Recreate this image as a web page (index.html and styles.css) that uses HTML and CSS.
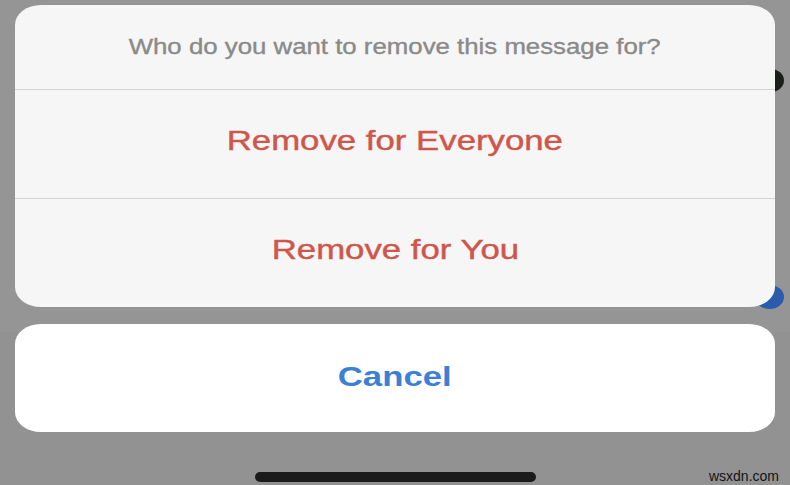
FILE: index.html
```html
<!DOCTYPE html>
<html lang="en">
<head>
<meta charset="utf-8">
<title>Remove message</title>
<link rel="stylesheet" href="styles.css">
</head>
<body>
<div class="screen">
  <span class="peek peek-dark"></span>
  <span class="peek peek-blue"></span>

  <div class="sheet">
    <div class="sheet-title"><span class="txt">Who do you want to remove this message for?</span></div>
    <button class="action destructive"><span class="txt">Remove for Everyone</span></button>
    <button class="action destructive"><span class="txt">Remove for You</span></button>
  </div>

  <button class="sheet cancel"><span class="txt">Cancel</span></button>

  <div class="home-area"><span class="home-indicator"></span></div>

  <span class="watermark">wsxdn.com</span>
</div>
</body>
</html>
```

FILE: styles.css
```css
* {
  box-sizing: border-box;
}

html,
body {
  margin: 0;
  width: 790px;
  height: 485px;
  overflow: hidden;
}

body {
  background: linear-gradient(#959595 0, #959595 332px, #929292 332px);
  font-family: "Liberation Sans", Arial, Helvetica, sans-serif;
}

.screen {
  position: relative;
  height: 485px;
  padding: 5px 15px 0;
  display: flex;
  flex-direction: column;
  gap: 17px;
}

/* the text in this view is drawn wide */
.txt {
  display: inline-block;
  white-space: nowrap;
  transform: scaleX(1.27);
}

.sheet {
  position: relative;
  z-index: 1;
  display: flex;
  flex-direction: column;
  background: #f6f6f6;
  border-radius: 26px / 20px;
  overflow: hidden;
}

.sheet-title {
  height: 85px;
  display: flex;
  align-items: center;
  justify-content: center;
  border-bottom: 1px solid #d3d3d3;
  color: #8a8a8a;
  font-size: 21.5px;
  -webkit-text-stroke: 0.35px #8a8a8a;
}

.sheet-title .txt {
  transform: scaleX(1.2);
}

.action {
  height: 109px;
  margin: 0;
  padding: 0 0 8px;
  border: 0;
  background: transparent;
  display: flex;
  align-items: center;
  justify-content: center;
  font-family: inherit;
  font-size: 28.5px;
}

.action + .action {
  height: 108px;
}

.action:first-of-type {
  border-bottom: 1px solid #d3d3d3;
}

.action .txt {
  transform: scaleX(1.22);
}

.destructive {
  color: #cf564b;
  -webkit-text-stroke: 0.45px #cf564b;
}

.cancel {
  height: 108px;
  margin: 0;
  padding: 0 0 4px;
  border: 0;
  background: #ffffff;
  align-items: center;
  justify-content: center;
  font-family: inherit;
  font-size: 28.5px;
  font-weight: 700;
  color: #3b80d5;
}

.cancel .txt {
  transform: scaleX(1.22);
}

.home-area {
  flex: 1;
  display: flex;
  justify-content: center;
  padding-top: 23px;
}

.home-indicator {
  width: 281px;
  height: 10px;
  border-radius: 5px;
  background: #1b1b1b;
}

/* avatars of the conversation behind the sheet */
.peek {
  position: absolute;
  z-index: 0;
  border-radius: 50%;
}

.peek-dark {
  left: 757px;
  top: 69px;
  width: 27px;
  height: 23px;
  background: #1c201c;
}

.peek-blue {
  left: 755px;
  top: 285px;
  width: 29px;
  height: 24px;
  background: #2a5cab;
}

.watermark {
  position: absolute;
  z-index: 2;
  right: 11px;
  bottom: 0;
  font-family: "Liberation Sans", Arial, sans-serif;
  font-size: 14px;
  line-height: 17px;
  color: #141414;
}
```
